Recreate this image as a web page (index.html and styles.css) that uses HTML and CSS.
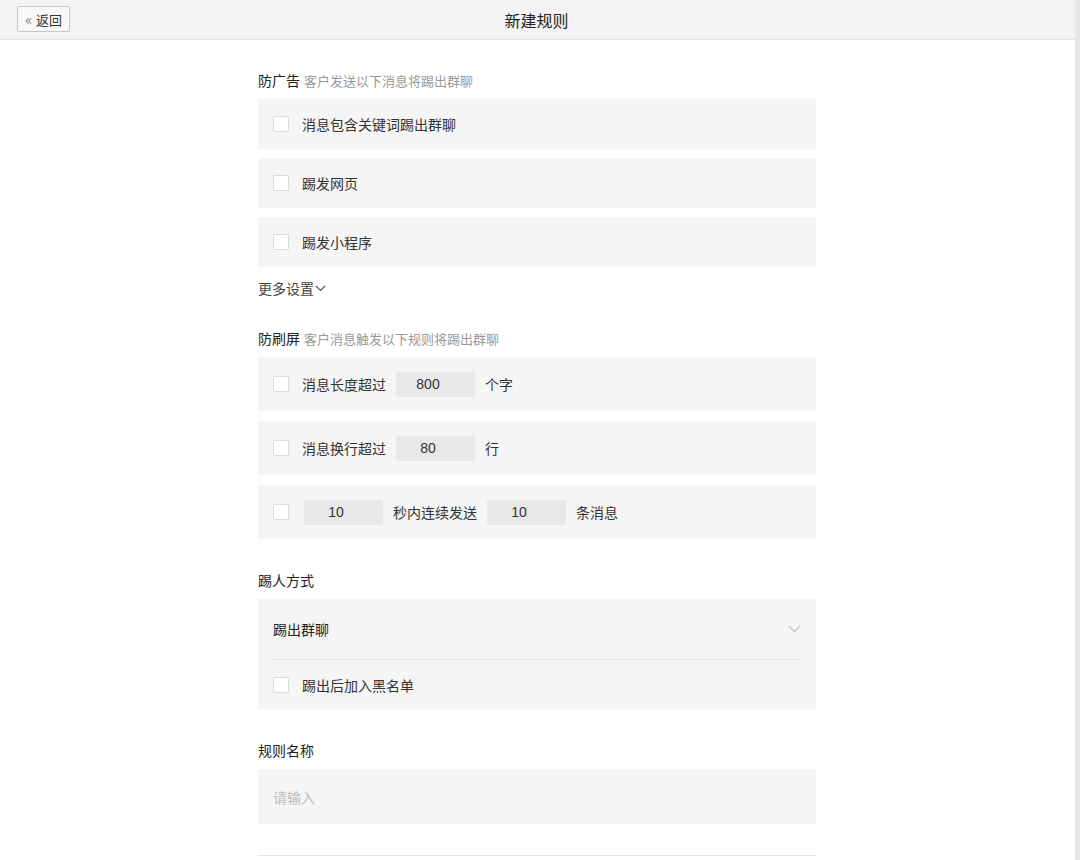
FILE: index.html
```html
<!DOCTYPE html>
<html lang="zh-CN">
<head>
  <meta charset="UTF-8" />
  <title>新建规则</title>
  <link rel="stylesheet" href="styles.css">
</head>
<body>
  <div class="page">
    <header class="topbar">
      <button class="back-btn"><span class="back-arrow">«</span>返回</button>
      <h1 class="title">新建规则</h1>
    </header>

    <main class="form">
      <section class="group">
        <div class="group-title">防广告<span class="group-desc">客户发送以下消息将踢出群聊</span></div>
        <label class="row"><span class="check"></span>消息包含关键词踢出群聊</label>
        <label class="row"><span class="check"></span>踢发网页</label>
        <label class="row"><span class="check"></span>踢发小程序</label>
        <div class="more">更多设置<svg width="11" height="7" viewBox="0 0 11 7"><path d="M1 1l4.5 4.5L10 1" fill="none" stroke="#555" stroke-width="1.2"/></svg></div>
      </section>

      <section class="group">
        <div class="group-title">防刷屏<span class="group-desc">客户消息触发以下规则将踢出群聊</span></div>
        <div class="row tall"><span class="check"></span>消息长度超过<span class="num">800</span>个字</div>
        <div class="row tall"><span class="check"></span>消息换行超过<span class="num">80</span>行</div>
        <div class="row tall"><span class="check"></span><span class="num first">10</span>秒内连续发送<span class="num">10</span>条消息</div>
      </section>

      <section class="group spaced">
        <div class="group-title">踢人方式</div>
        <div class="box">
          <div class="select">踢出群聊<svg width="13" height="8" viewBox="0 0 13 8"><path d="M1 1l5.5 5.5L12 1" fill="none" stroke="#c4c4c4" stroke-width="1.3"/></svg></div>
          <label class="box-row"><span class="check"></span>踢出后加入黑名单</label>
        </div>
      </section>

      <section class="group spaced">
        <div class="group-title">规则名称</div>
        <div class="text-input">请输入</div>
      </section>

      <div class="bottom-line"></div>
    </main>
  </div>
</body>
</html>
```

FILE: styles.css
```css
body {
  margin: 0;
  background: #ffffff;
  font-family: "Noto Sans CJK SC", "Noto Sans", sans-serif;
  font-size: 14px;
  color: #333;
}

.page {
  width: 1075px;
  height: 860px;
  border-right: 5px solid #e7e7e9;
  overflow: hidden;
}

.topbar {
  position: relative;
  height: 39px;
  background: #f3f3f3;
  border-bottom: 1px solid #e1e1e1;
  display: flex;
  align-items: center;
  justify-content: center;
}

.back-btn {
  position: absolute;
  left: 17px;
  top: 6px;
  width: 53px;
  height: 26px;
  padding: 0;
  border: 1px solid #c6c6c6;
  border-radius: 2px;
  background: #f8f8f8;
  font-family: inherit;
  font-size: 13px;
  color: #333;
  display: flex;
  align-items: center;
  justify-content: center;
  gap: 4px;
}

.back-arrow {
  color: #888;
  font-size: 15px;
  line-height: 1;
  margin-top: -2px;
}

.title {
  margin: 0 0 0 -2px;
  font-size: 16px;
  font-weight: normal;
  color: #222;
}

.form {
  width: 558px;
  margin-left: 258px;
  padding-top: 31px;
}

.group {
  display: flex;
  flex-direction: column;
  gap: 9px;
  margin-bottom: 31px;
}

.group.spaced {
  padding-top: 1px;
}

.group-title {
  font-size: 14px;
  color: #222;
  height: 18px;
  line-height: 18px;
  margin-bottom: 1px;
}

.group-desc {
  font-size: 13px;
  color: #999;
  margin-left: 4px;
}

.row {
  height: 50px;
  background: #f5f5f5;
  display: flex;
  align-items: center;
  padding-left: 15px;
  color: #333;
}

.row.tall {
  height: 54px;
}

.row.tall + .row.tall {
  margin-top: 1px;
}

.check {
  width: 14px;
  height: 14px;
  background: #fff;
  border: 1px solid #dcdcdc;
  border-radius: 1px;
  margin-right: 13px;
  flex-shrink: 0;
}

.num {
  width: 79px;
  height: 25px;
  background: #e8e8e8;
  border-radius: 2px;
  display: flex;
  align-items: center;
  justify-content: center;
  margin: 0 10px;
  font-family: "Liberation Sans", Arial, sans-serif;
  font-size: 14px;
  color: #333;
  padding-right: 15px;
  box-sizing: border-box;
}

.num.first {
  margin-left: 2px;
}

.more {
  display: flex;
  align-items: center;
  gap: 1px;
  height: 20px;
  margin-top: 2px;
  color: #444;
}

.box {
  background: #f5f5f5;
  padding: 0 15px;
}

.select {
  height: 60px;
  border-bottom: 1px solid #e2e2e2;
  display: flex;
  align-items: center;
  justify-content: space-between;
  color: #222;
}

.box-row {
  height: 49px;
  display: flex;
  align-items: center;
}

.text-input {
  height: 55px;
  background: #f5f5f5;
  display: flex;
  align-items: center;
  padding-left: 15px;
  color: #bbb;
}

.bottom-line {
  border-top: 1px solid #e5e5e5;
}
```
